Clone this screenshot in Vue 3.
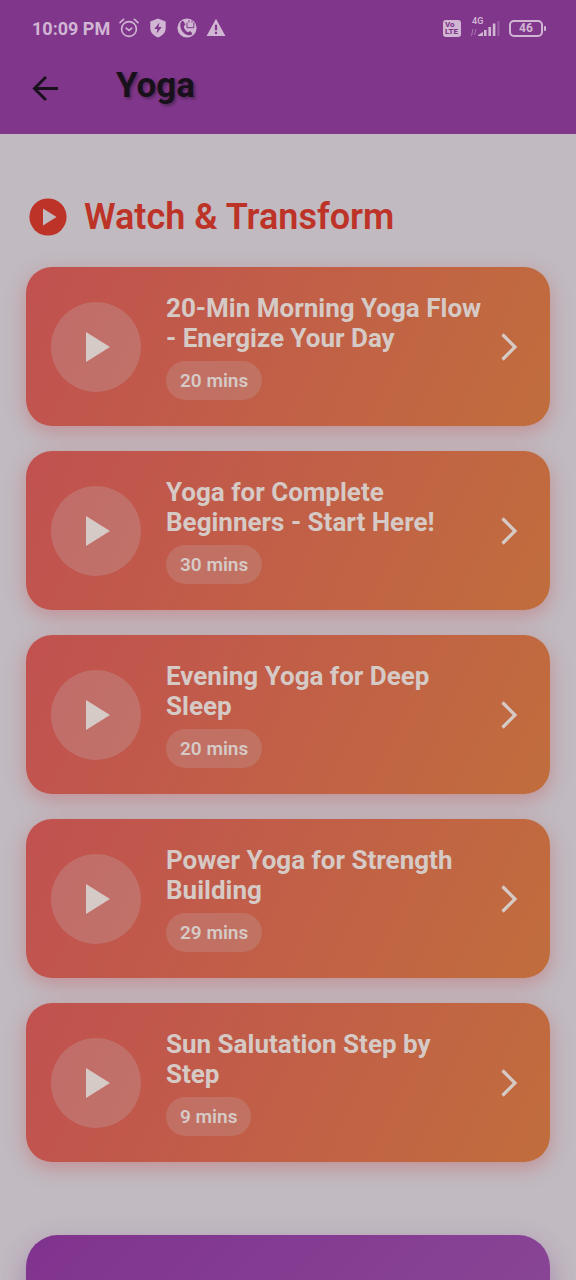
<script setup>
const videos = [
  { title: '20-Min Morning Yoga Flow - Energize Your Day', length: '20 mins' },
  { title: 'Yoga for Complete Beginners - Start Here!', length: '30 mins' },
  { title: 'Evening Yoga for Deep Sleep', length: '20 mins' },
  { title: 'Power Yoga for Strength Building', length: '29 mins' },
  { title: 'Sun Salutation Step by Step', length: '9 mins' },
]
</script>

<template>
  <div class="screen">
    <header class="top">
      <div class="status">
        <span class="clock">10:09 PM</span>
        <svg class="s-icon" viewBox="0 0 20 20" fill="none" stroke="currentColor" stroke-width="1.6" stroke-linecap="round">
          <circle cx="10" cy="11" r="7.4" />
          <path d="M7.2 10.2 10 12.4l2.8-2.2M1 4.6 4.6 1.4M19 4.6 15.4 1.4" />
        </svg>
        <svg class="s-icon" viewBox="0 0 20 20">
          <path fill="currentColor" d="M10 .6 17.7 3.4V10c0 4.4-3 7.6-7.7 9.5C5.3 17.6 2.3 14.4 2.3 10V3.4Z" />
          <path fill="#80378b" d="M11.4 4.5 6.2 11h3.2l-.8 4.6L13.800 9h-3.200Z" />
        </svg>
        <svg class="s-icon" viewBox="0 0 20 20">
          <circle cx="10" cy="10" r="9.6" fill="currentColor" />
          <path fill="#80378b" d="M4.600 3.400c1-.7 1.900-.4 2.400.5l1 2c.3.7.1 1.200-.5 1.700-.8.7-.8 1.300-.3 2.500.7 1.700 1.600 2.900 2.800 3.700.8.5 1.300.4 2-.1.7-.5 1.200-.5 1.800 0l1 1c.7.7.5 1.500-.3 2-2.700 1.500-6 .3-8.400-2.400C3.400 11 2.100 5.600 4.600 3.400Z" />
          <path fill="none" stroke="#80378b" stroke-width="1" d="M10 4.500v5.200h6.800V4.500M12 4.500V2.200M15 4.500V2.800" />
        </svg>
        <svg class="s-icon" viewBox="0 0 20 20">
          <path fill="currentColor" d="M10 .8 19.400 18H.6Z" />
          <path stroke="#80378b" stroke-width="2.2" d="M10 6.800v5.400M10 13.800V16" />
        </svg>
        <span class="spacer"></span>
        <span class="volte"><span>Vo</span><span>LTE</span></span>
        <span class="signal">
          <span class="net">4G</span>
          <svg class="bars" viewBox="0 0 30 20">
            <path stroke="currentColor" stroke-width="1" opacity=".5" d="M1.500 18 3 11M4.500 17 6 11" />
            <path fill="currentColor" d="M8 18v-1l5-3v4ZM14 18v-6h2.600v6ZM18.400 18V9H21v9ZM22.800 18V5.500h2.600V18Z" />
            <path fill="currentColor" opacity=".3" d="M27.400 18V3h2v15Z" />
          </svg>
        </span>
        <span class="battery">46</span>
      </div>
      <div class="bar">
        <button class="back" type="button" aria-label="Back">
          <svg viewBox="0 0 28 28" fill="none" stroke="currentColor" stroke-width="3">
            <path d="M27 14H3M14.500 2 2.500 14l12 12" />
          </svg>
        </button>
        <h1>Yoga</h1>
      </div>
    </header>

    <main>
      <h2>
        <svg viewBox="0 0 38 38">
          <circle cx="19" cy="19" r="18.600" fill="#bd3328" />
          <path d="M14 10.500v17L27.500 19Z" fill="#c2bac1" />
        </svg>
        <span>Watch &amp; Transform</span>
      </h2>
      <ul>
        <li v-for="video in videos" :key="video.title">
          <a class="card" href="#">
            <span class="play">
              <svg viewBox="0 0 24 30"><path d="M0 0v30L24 15Z" fill="currentColor" /></svg>
            </span>
            <span class="info">
              <span class="title">{{ video.title }}</span>
              <span class="chip">{{ video.length }}</span>
            </span>
            <svg class="chevron" viewBox="0 0 16 28" fill="none" stroke="currentColor" stroke-width="3.200">
              <path d="M1.500 1.500 14 14 1.500 26.500" />
            </svg>
          </a>
        </li>
      </ul>
      <section class="next"></section>
    </main>
  </div>
</template>

<style>
html, body { background: #c1bac1; }
body { margin: 0; overflow: hidden; }
</style>

<style scoped>
.screen {
  height: 100vh;
  overflow: hidden;
  background: #c1bac1;
  font-family: Roboto, "Liberation Sans", sans-serif;
}
.top {
  box-sizing: border-box;
  padding: 16px 33px 20px 32px;
  background: #80378b;
}
.status {
  display: flex;
  align-items: center;
  gap: 9px;
  height: 24px;
  color: #d1b6d4;
}
.clock { font-size: 18px; font-weight: 700; }
.s-icon { width: 20px; height: 20px; flex: none; }
.spacer { flex: 1; }
.volte {
  display: flex;
  flex-direction: column;
  box-sizing: border-box;
  width: 18px;
  height: 17px;
  padding: 1px 2px;
  border-radius: 3px;
  background: #d1b6d4;
  color: #80378b;
  font-size: 8px;
  font-weight: 800;
  line-height: 7px;
}
.signal { position: relative; width: 30px; height: 20px; }
.net { position: absolute; top: -1px; left: 2px; font-size: 9px; line-height: 9px; font-weight: 600; }
.bars { display: block; width: 30px; height: 20px; }
.battery {
  position: relative;
  box-sizing: border-box;
  width: 34px;
  height: 17px;
  border: 2px solid currentColor;
  border-radius: 5px;
  font-size: 12px;
  font-weight: 700;
  line-height: 13px;
  text-align: center;
}
.battery::after {
  content: "";
  position: absolute;
  top: 4px;
  right: -5px;
  width: 2px;
  height: 5px;
  border-radius: 1px;
  background: currentColor;
}
.bar {
  display: flex;
  align-items: center;
  gap: 57px;
  margin-top: 22px;
}
.back {
  display: flex;
  padding: 0;
  border: 0;
  background: none;
  color: #18101b;
}
.back svg { width: 27px; height: 27px; }
h1 {
  margin: 2px 0 6px;
  color: #18101b;
  font-size: 35px;
  font-weight: 700;
  line-height: 44px;
  text-shadow: 2px 2px 3px rgba(24, 16, 27, 0.4);
}
main { padding: 64px 26px 0; }
h2 {
  display: flex;
  align-items: center;
  gap: 17px;
  margin: 0;
  padding-left: 3px;
  color: #bd3328;
  font-size: 36px;
  font-weight: 600;
  line-height: 38px;
}
h2 svg { width: 38px; height: 38px; }
ul {
  display: flex;
  flex-direction: column;
  gap: 25px;
  margin: 31px 0 0;
  padding: 0;
  list-style: none;
}
.card {
  display: flex;
  align-items: center;
  gap: 25px;
  padding: 26px 26px 26px 25px;
  border-radius: 26px;
  background: linear-gradient(115deg, #c15150 0%, #c15f47 50%, #c16d3d 100%);
  box-shadow: 0 6px 20px rgba(193, 81, 80, 0.4);
  color: #d6cac6;
  text-decoration: none;
}
.play {
  display: flex;
  flex: none;
  align-items: center;
  justify-content: center;
  width: 90px;
  height: 90px;
  border-radius: 50%;
  background: rgba(194, 186, 193, 0.25);
}
.play svg { width: 24px; height: 30px; padding-left: 4px; }
.info {
  display: flex;
  flex: 1;
  flex-direction: column;
  align-items: flex-start;
  gap: 8px;
}
.title { font-size: 26px; font-weight: 700; line-height: 30px; margin-right: -13px; }
.chip {
  padding: 0 14px;
  border-radius: 20px;
  background: rgba(194, 186, 193, 0.22);
  font-size: 19px;
  font-weight: 600;
  line-height: 39px;
}
.chevron { flex: none; width: 16px; height: 28px; margin-right: 7px; }
.next {
  height: 240px;
  margin-top: 73px;
  border-radius: 32px;
  background: linear-gradient(135deg, #80338e, #8b4a98);
  box-shadow: 0 10px 26px rgba(128, 55, 139, 0.4);
}
</style>
